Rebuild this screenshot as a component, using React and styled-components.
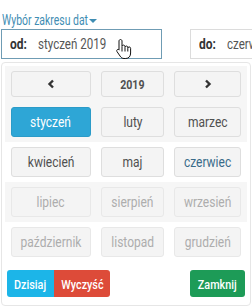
import React from 'react';
import styled, { createGlobalStyle } from 'styled-components';

const Global = createGlobalStyle`
  html, body { margin: 0; padding: 0; background: #fff; }
  body {
    font-family: Roboto, "Liberation Sans", sans-serif;
    color: #444;
  }
`;

const Page = styled.div`
  width: 252px;
  height: 308px;
  overflow: hidden;
  padding: 12px 0 0 1px;
  box-sizing: border-box;
`;

const Narrow = styled.span`
  display: inline-block;
  white-space: nowrap;
  transform: scaleX(${p => p.$k || 0.8});
  transform-origin: ${p => (p.$left ? 'left' : 'center')} center;
`;

const RangeLabel = styled.div`
  display: flex;
  align-items: center;
  height: 16px;
  padding-left: 1px;
  font-size: 14.5px;
  color: #3f8db3;
`;

const LabelText = styled(Narrow)`
  width: 86px;
`;

const Caret = styled.span`
  width: 0;
  height: 0;
  border-left: 4px solid transparent;
  border-right: 4px solid transparent;
  border-top: 4px solid #3f8db3;
  margin: 2px 0 0 1px;
`;

const Inputs = styled.div`
  display: flex;
  gap: 28px;
  margin-top: 1px;
  white-space: nowrap;
`;

const Field = styled.div`
  position: relative;
  display: flex;
  align-items: center;
  flex: none;
  width: ${p => p.$w}px;
  height: 30px;
  box-sizing: border-box;
  border: 1px solid ${p => (p.$focus ? '#6f9cb4' : '#dcdcdc')};
  padding-left: 8px;
  font-size: 15px;
`;

const FieldKey = styled(Narrow)`
  flex: none;
  width: 28px;
  font-weight: 700;
  color: #333;
`;

const FieldValue = styled(Narrow)`
  color: #555;
`;

const Cursor = styled.svg`
  position: absolute;
  left: 113px;
  top: 8px;
`;

const Panel = styled.div`
  margin-top: 3px;
  width: 250px;
  box-sizing: border-box;
  border: 1px solid #e6e6e6;
  border-radius: 4px;
  padding: 3px 3px 8px 3px;
`;

const Band = styled.div`
  display: grid;
  grid-template-columns: 80px 63px 67px;
  column-gap: 10px;
  padding: 5px 6px;
  background: ${p => (p.$shade ? '#f6f6f6' : '#fff')};
`;

const Cell = styled.button`
  height: ${p => (p.$nav ? 26 : 30)}px;
  box-sizing: border-box;
  border: 1px solid ${p => (p.$active ? '#2b9bc8' : p.$off ? '#e8e8e8' : '#dedede')};
  border-radius: 3px;
  background: ${p => (p.$active ? '#2ea6d6' : '#f4f4f4')};
  color: ${p => (p.$active ? '#fff' : p.$off ? '#adadad' : p.$current ? '#3a6b89' : '#505050')};
  font-family: inherit;
  font-size: ${p => (p.$nav ? 12.5 : 15)}px;
  font-weight: ${p => (p.$nav ? 700 : 400)};
  padding: 0;
  display: flex;
  align-items: center;
  justify-content: center;
`;

const Footer = styled.div`
  display: flex;
  align-items: center;
  margin-top: 8px;
  padding: 0 2px;
`;

const Action = styled.button`
  height: 27px;
  box-sizing: border-box;
  border: none;
  border-radius: ${p => p.$r || '3px'};
  background: ${p => p.$bg};
  color: #fff;
  font-family: inherit;
  font-size: 13.5px;
  font-weight: 500;
  width: ${p => p.$w}px;
  padding: 0;
  margin-left: ${p => (p.$push ? 'auto' : '0')};
  display: flex;
  align-items: center;
  justify-content: center;
`;

const Chevron = ({ dir }) => (
  <svg width="8" height="10" viewBox="0 0 8 10">
    <path
      d={dir === 'left' ? 'M6 1.5 L2.5 5 L6 8.5' : 'M2 1.5 L5.5 5 L2 8.5'}
      fill="none"
      stroke="#333"
      strokeWidth="2.4"
    />
  </svg>
);

const rows = [
  [['styczeń', 'active'], ['luty'], ['marzec']],
  [['kwiecień'], ['maj'], ['czerwiec', 'current']],
  [['lipiec', 'off'], ['sierpień', 'off'], ['wrzesień', 'off']],
  [['październik', 'off'], ['listopad', 'off'], ['grudzień', 'off']],
];

const App = () => (
  <>
    <Global />
    <Page>
      <RangeLabel>
        <LabelText $left $k={0.72}>Wybór zakresu dat</LabelText>
        <Caret />
      </RangeLabel>
      <Inputs>
        <Field $w={161} $focus>
          <FieldKey $left>od:</FieldKey>
          <FieldValue $left $k={0.77}>styczeń 2019</FieldValue>
          <Cursor width="17" height="22" viewBox="0 0 17 22">
            <path
              d="M5.5 1.5 C6.3 1.5 7 2.2 7 3 V8.5 C7 7.7 7.7 7.1 8.5 7.1 S10 7.7 10 8.5 V9.3 C10 8.6 10.7 8 11.4 8 S12.8 8.6 12.8 9.3 V10.1 C12.8 9.4 13.5 8.9 14.2 8.9 S15.6 9.5 15.6 10.3 V15 C15.6 18.2 13.9 20.5 10.8 20.5 H9 C7.2 20.5 6.1 19.6 5.1 18.1 L2 13.6 C1.5 12.8 1.7 11.9 2.5 11.5 C3.2 11.1 3.8 11.5 4.2 12.1 L4 11.8 V3 C4 2.2 4.7 1.5 5.5 1.5 Z M10 9.5 V13.5 M12.8 10.2 V13.5 M7 9 V13.5"
              fill="#fff"
              stroke="#111"
              strokeWidth="1"
              strokeLinejoin="round"
            />
          </Cursor>
        </Field>
        <Field $w={120}>
          <FieldKey $left>do:</FieldKey>
          <FieldValue $left $k={0.77}>czerwiec 2019</FieldValue>
        </Field>
      </Inputs>
      <Panel>
        <Band $shade>
          <Cell $nav><Chevron dir="left" /></Cell>
          <Cell $nav><Narrow $k={0.85}>2019</Narrow></Cell>
          <Cell $nav><Chevron dir="right" /></Cell>
        </Band>
        {rows.map((row, i) => (
          <Band key={i} $shade={i % 2 === 0}>
            {row.map(([name, state]) => (
              <Cell
                key={name}
                $active={state === 'active'}
                $off={state === 'off'}
                $current={state === 'current'}
              >
                <Narrow>{name}</Narrow>
              </Cell>
            ))}
          </Band>
        ))}
        <Footer>
          <Action $bg="#1cb5e8" $r="3px 0 0 3px" $w={47}><Narrow>Dzisiaj</Narrow></Action>
          <Action $bg="#dd4b39" $r="0 3px 3px 0" $w={56}><Narrow>Wyczyść</Narrow></Action>
          <Action $bg="#1d9b57" $push $w={55}><Narrow>Zamknij</Narrow></Action>
        </Footer>
      </Panel>
    </Page>
  </>
);

export default App;
